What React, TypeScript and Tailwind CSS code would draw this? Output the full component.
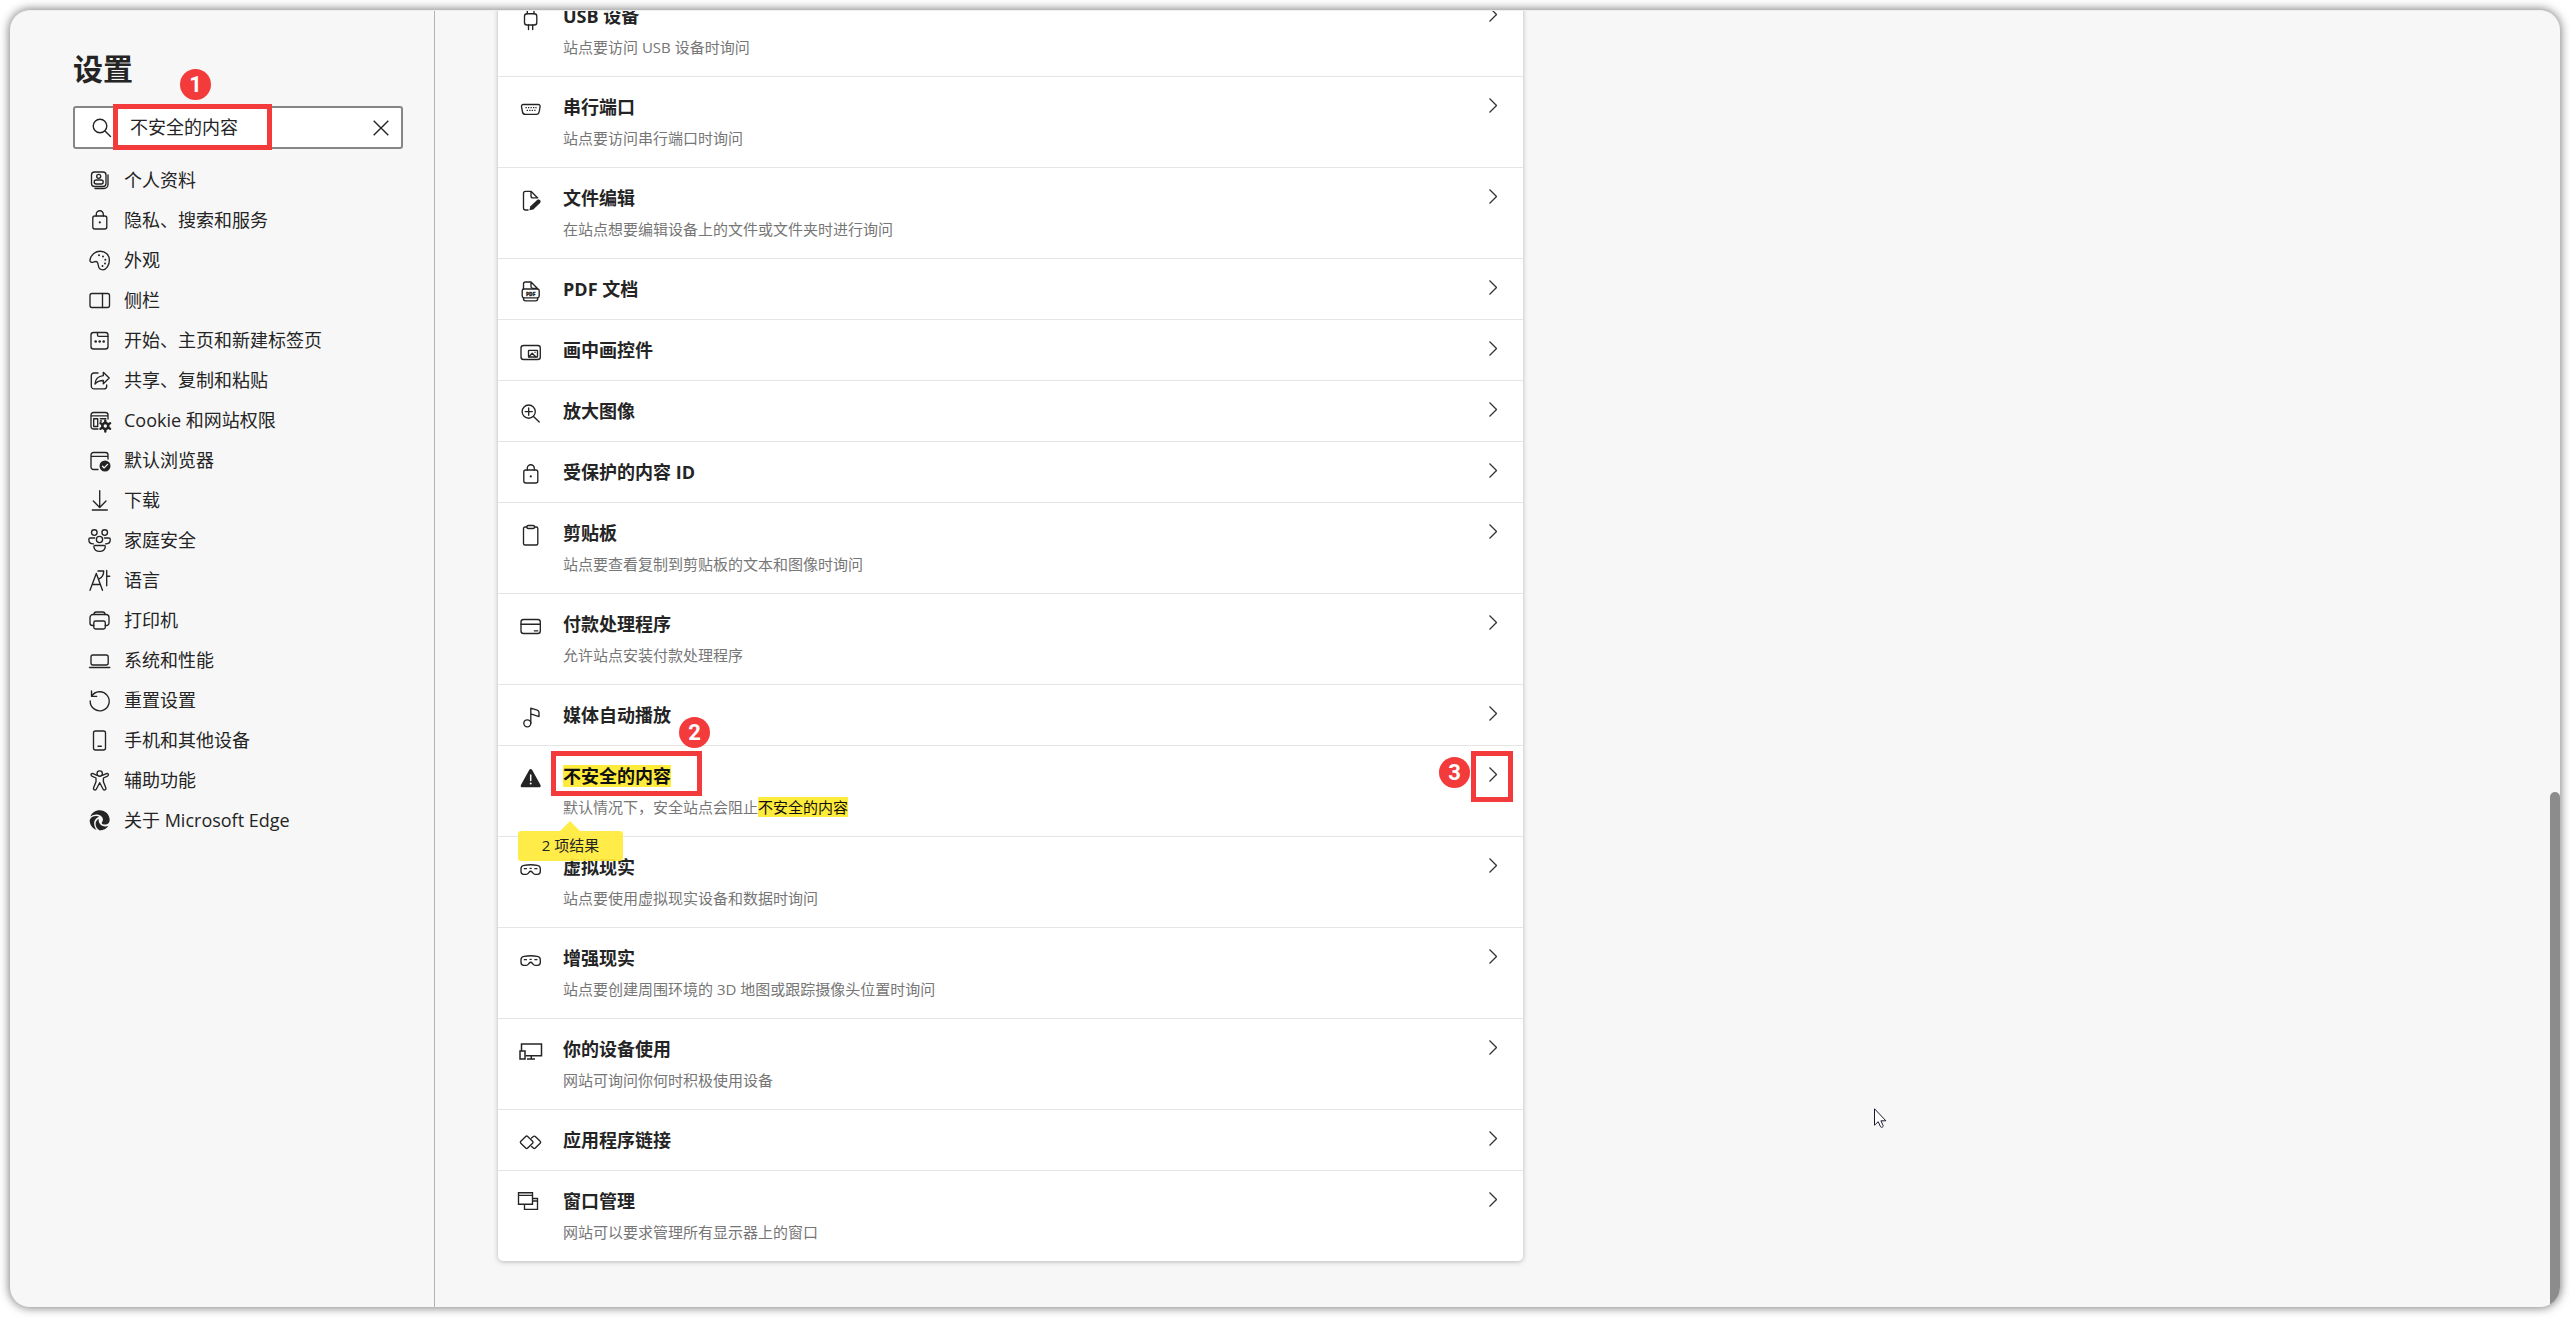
import type { ReactNode } from "react";

type IconName =
  | "profile" | "lock" | "palette" | "sidebar" | "home" | "share" | "cookie" | "browser"
  | "download" | "family" | "language" | "printer" | "laptop" | "reset" | "phone" | "person"
  | "edge" | "usb" | "serial" | "fileEdit" | "pdf" | "pip" | "zoom" | "clipboard" | "card"
  | "music" | "warning" | "headset" | "devices" | "link" | "windows";

const glyphs: Record<IconName, ReactNode> = {
  profile: (
    <>
      <rect x="3.5" y="4" width="14.5" height="14.5" rx="3" />
      <path d="M20 7v9.5a4 4 0 0 1-4 4H7" />
      <circle cx="10.7" cy="8.3" r="2" />
      <rect x="6.2" y="12" width="9" height="4" rx="2" />
    </>
  ),
  lock: (
    <>
      <rect x="4.8" y="8" width="14" height="13" rx="2" />
      <path d="M8.3 8V6.2a3.5 3.5 0 0 1 7 0V8" />
      <circle cx="11.8" cy="14.4" r="1.1" fill="currentColor" stroke="none" />
    </>
  ),
  palette: (
    <>
      <path d="M2 11.8C3.2 6.500 7.500 3.200 12.200 3.200c5.300 0 9.200 4 9.200 8.800 0 5.300-3.200 9.800-6.500 9.800-2.600 0-4.200-1.700-4.600-4.300-.3-2.400-.6-4-2.300-4-1.500 0-2.200.9-3.500.9C2.800 14.400 1.700 13.400 2 11.800z" />
      <g fill="currentColor" stroke="none">
        <circle cx="11" cy="7.300" r="1" />
        <circle cx="15" cy="8.500" r="1" />
        <circle cx="17.300" cy="11.800" r="1" />
        <circle cx="17" cy="15.500" r="1" />
        <circle cx="14.500" cy="18" r="1" />
      </g>
    </>
  ),
  sidebar: (
    <>
      <rect x="2" y="5.500" width="19.500" height="14" rx="2" />
      <path d="M14.500 5.500v14" />
    </>
  ),
  home: (
    <>
      <rect x="3" y="4.500" width="17" height="16.500" rx="2.500" />
      <path d="M9.500 4.500V7a1.300 1.300 0 0 0 1.300 1.300H20" />
      <g fill="currentColor" stroke="none">
        <circle cx="7.700" cy="13.500" r="1.300" />
        <circle cx="11.700" cy="13.500" r="1.300" />
        <circle cx="15.700" cy="13.500" r="1.300" />
      </g>
    </>
  ),
  share: (
    <>
      <path d="M10 5H6a2.700 2.700 0 0 0-2.700 2.700v10.500A2.700 2.700 0 0 0 6 20.900h10a2.700 2.700 0 0 0 2.700-2.700V17" />
      <path d="M15.300 4.300l5.900 5.700-5.900 5.700v-3.200c-3.500 0-6 .8-8.300 3.500.3-4.700 3.500-7.800 8.300-8.300z" />
    </>
  ),
  cookie: (
    <>
      <path d="M10 21H5.500A2.500 2.500 0 0 1 3 18.500V7a2.500 2.500 0 0 1 2.500-2.500h12A2.500 2.500 0 0 1 20 7v4M3 7.900h17" />
      <rect x="5.700" y="10.700" width="4" height="7.800" />
      <path d="M12.300 10.700h5.500M12.300 13h1.200" />
      <circle cx="17.300" cy="18" r="3" strokeWidth="2.600" />
      <path d="M17.300 12.500v2M17.300 21.500v2M12.500 15.200l1.800 1M20.300 19.700l1.800 1M12.500 20.800l1.800-1M20.300 16.300l1.800-1" strokeWidth="2.400" />
    </>
  ),
  browser: (
    <>
      <path d="M10 21.500H5.500A2.500 2.500 0 0 1 3 19V7a2.500 2.500 0 0 1 2.500-2.500h12A2.500 2.500 0 0 1 20 7v4M3 8.300h17" />
      <circle cx="17" cy="18" r="5.500" fill="currentColor" stroke="none" />
      <path d="M14.500 18.200l1.700 1.700 3.400-3.500" stroke="#f7f7f7" />
    </>
  ),
  download: <path d="M11.700 2.700v16.500M5.300 13l6.400 6.500L18 13M4.300 22h15" />,
  family: (
    <>
      <circle cx="6.300" cy="4.500" r="2.800" />
      <circle cx="16.700" cy="4.500" r="2.800" />
      <circle cx="11.500" cy="11.500" r="3.100" />
      <path d="M6.700 10H2.300c-.9 0-1.500.5-1.500 1.400 0 2.800 2 4.500 4.700 4.500M16.400 10h4.400c.9 0 1.500.5 1.500 1.400 0 2.800-2 4.500-4.700 4.500" />
      <path d="M7.200 17.500h8.800c.8 0 1.400.5 1.300 1.300-.4 3-2.600 4.500-5.700 4.500S6.300 21.800 5.900 18.800c-.1-.8.5-1.300 1.300-1.300z" />
    </>
  ),
  language: <path d="M2 22.300L8.300 5.500l6.200 16.800M4.200 16.500h8.200M10 3h5.700c0 4-1.500 6.300-4.300 7.700M18.700 2.500v15.300M18.700 8.200h3" />,
  printer: (
    <>
      <path d="M5.800 17.500H4.500A2.500 2.500 0 0 1 2 15V9.500A3 3 0 0 1 5 6.500h13a3 3 0 0 1 3 3V15a2.500 2.500 0 0 1-2.500 2.500h-1.200" />
      <path d="M6 6.500c0-1.700.8-2.500 2.300-2.500h6.400c1.500 0 2.300.8 2.300 2.500" />
      <rect x="5.800" y="13" width="11.500" height="8" rx="1.800" />
    </>
  ),
  laptop: (
    <>
      <rect x="3" y="7" width="17.200" height="10" rx="2" />
      <path d="M1.500 19.500h20.300" />
    </>
  ),
  reset: <path d="M3.600 8.300A9.500 9.500 0 1 1 2.200 13M3.500 3v5.300H8.700" />,
  phone: (
    <>
      <rect x="5.500" y="3" width="12" height="19" rx="2" />
      <path d="M10 18.200h3.300" />
    </>
  ),
  person: (
    <>
      <circle cx="11.700" cy="5.500" r="2.700" />
      <path d="M9 7.300L5 5.600c-1-.4-2 .2-2 1.200 0 .6.300 1 .9 1.300L8 10v3.800l-2.400 6c-.4 1 .1 1.900 1 2.100.8.200 1.500-.1 1.800-.9l3.300-6.300L15 21c.3.800 1 1.100 1.800.9.900-.2 1.400-1.100 1-2.100l-2.400-6V10l4.100-1.900c.6-.3.900-.7.900-1.300 0-1-1-1.600-2-1.200l-4 1.700" />
    </>
  ),
  edge: (
    <g fill="currentColor" stroke="none">
      <path d="M2.300 8.600C3.800 4.800 7.400 2.300 11.700 2.300c5.600 0 10 4.400 10 9.700 0 2.700-1.800 4.600-4.400 4.600-2 0-3.600-.7-3.600-1.700 0-.7 1.200-1.100 1.200-3.200 0-3-2.900-5.200-6.400-5.200-2.300 0-4.400.8-6.200 2.100z" />
      <path d="M1.700 12.200c.6-2.600 3.300-4.200 6.600-4.200 1.200 0 2.200.3 3 .7C7.600 10 5.800 13 6.200 16.200c.2 2.100 1.100 4 2.500 5.700-4.200-1.300-7.100-5.200-7-9.700z" />
      <path d="M10.700 10.700c-.7 3.600 2 7.700 6.700 7.700 1.200 0 2.200-.2 3-.6-1.800 2.900-5 4.600-8.600 4.600-2.500-1.400-4.200-3.700-4.200-6.500 0-2.200 1.200-4.200 3.100-5.200z" />
    </g>
  ),
  usb: (
    <>
      <rect x="5.500" y="7.700" width="12.300" height="11.300" rx="2.500" />
      <path d="M8.300 2v5.700M15 2v5.700M9.500 19v4.500M13.700 19v4.500" />
    </>
  ),
  serial: (
    <>
      <path d="M4.300 7.500h15c1.300 0 2 .9 1.800 2.100l-1 5.400c-.3 1.500-1.300 2.300-2.800 2.300H6.300c-1.500 0-2.500-.8-2.800-2.300l-1-5.400C2.300 8.400 3 7.500 4.300 7.500z" />
      <path d="M6.500 10.700h1.300M9 10.700h1.300M11.500 10.700h1.300M14 10.700h1.300M16.300 10.700h1.300M7.700 13.400H9M10.200 13.400h1.300M12.700 13.400H14M15.200 13.400h1.300" strokeWidth="1.300" strokeLinecap="butt" />
    </>
  ),
  fileEdit: (
    <>
      <path d="M9 22H6.500a2 2 0 0 1-2-2V5.300a2 2 0 0 1 2-2H12l6.700 6.600M12 3.300v4.600a2 2 0 0 0 2 2h4.700" />
      <path d="M10.400 22.300l1-4 6.700-6.300c1.800-1.600 4.700.8 3 2.900l-6.800 6.500z" fill="currentColor" stroke="none" />
    </>
  ),
  pdf: (
    <>
      <path d="M4.500 10V5a2 2 0 0 1 2-2H12l6.500 6.500M12 3v4.500a1.800 1.800 0 0 0 1.800 1.800h4.700M4.500 19v.8a2 2 0 0 0 2 2h10.200a2 2 0 0 0 2-2V19" />
      <rect x="3.200" y="10" width="17" height="8.800" rx="1.800" />
      <text x="11.700" y="16.500" textAnchor="middle" fontSize="5" fontWeight="800" fill="currentColor" strokeWidth="0.300">PDF</text>
    </>
  ),
  pip: (
    <>
      <rect x="2" y="5.500" width="19.300" height="14" rx="2.500" />
      <rect x="9.500" y="10.300" width="9" height="6.700" rx=".5" />
      <path d="M10 16.700l3.200-3.400 3.500 3.500" />
      <circle cx="16" cy="12.300" r=".7" fill="currentColor" stroke="none" />
    </>
  ),
  zoom: (
    <>
      <circle cx="9.700" cy="10.600" r="6.600" />
      <path d="M14.500 15.500l5.700 5.500M9.700 7v7.200M6.100 10.600h7.200" />
    </>
  ),
  clipboard: (
    <>
      <path d="M7.700 4H6a1.500 1.500 0 0 0-1.500 1.500v15A1.500 1.500 0 0 0 6 22h11.300a1.500 1.500 0 0 0 1.500-1.500v-15A1.500 1.500 0 0 0 17.300 4h-1.600" />
      <rect x="7.800" y="2.500" width="7.800" height="3" rx="1.500" />
    </>
  ),
  card: (
    <>
      <rect x="2" y="5.500" width="19.300" height="14" rx="2.500" />
      <path d="M2 10.200h19.300M15.300 16.800h3.500" />
    </>
  ),
  music: (
    <>
      <circle cx="8.300" cy="18.300" r="3.500" />
      <path d="M11.800 18.300V3.200l6.500 2c1 .4 1.700 1 1.700 2.200v4.200l-8.200-2.800" />
    </>
  ),
  warning: (
    <>
      <path d="M10.200 3.900c.6-1.200 2.300-1.200 3 0l8.300 15c.6 1.200-.1 2.400-1.400 2.400H3.300c-1.300 0-2-1.200-1.400-2.400z" fill="currentColor" stroke="none" />
      <path d="M11.700 9v5.500" stroke="#fff" strokeWidth="1.500" />
      <circle cx="11.700" cy="17.600" r="1" fill="#fff" stroke="none" />
    </>
  ),
  headset: (
    <>
      <path d="M5 8.300c4.500-.7 9-.7 13.300 0 1.900.3 3 1.500 3 3.300v3c0 1.700-1 2.800-2.700 2.800h-2.500c-1 0-1.500-.4-2.100-1.200l-.9-1.200c-.7-1-2.100-1-2.800 0l-.9 1.200c-.6.800-1.100 1.200-2.100 1.200H4.700C3 17.400 2 16.300 2 14.600v-3c0-1.800 1.100-3 3-3.300z" />
      <path d="M5.300 11.700h2.200M15.800 11.700H18M11 11.300h1.300" strokeWidth="1.200" />
    </>
  ),
  devices: (
    <g strokeLinejoin="miter" strokeLinecap="butt" strokeWidth="1.500">
      <path d="M2.500 12V5h20v11.700H6.500M12.300 16.700v3M8 20h8" />
      <rect x="1" y="12" width="5" height="8" />
    </g>
  ),
  link: (
    <>
      <path d="M6.700 6.500c.6-.6 1.400-.6 2 0l4.900 4.800c.6.600.6 1.400 0 2l-4.900 4.800c-.6.600-1.400.6-2 0l-4.900-4.800c-.6-.6-.6-1.400 0-2z" />
      <path d="M12.600 8l1.700-1.500c.6-.6 1.400-.6 2 0l4.900 4.800c.6.600.6 1.400 0 2l-4.900 4.800c-.6.600-1.400.6-2 0l-1.700-1.600" />
    </>
  ),
  windows: (
    <g strokeLinejoin="miter" strokeLinecap="butt">
      <path d="M-.5 1.700h14v11.500h-14zM-.5 4.300h14M13.500 7.500h5v10.800h-13v-5M13.500 10h5" />
    </g>
  ),
};

function Icon({ name }: { name: IconName }) {
  return (
    <svg
      viewBox="0 0 24 24"
      className="size-6 shrink-0 overflow-visible text-[#242424]"
      fill="none"
      stroke="currentColor"
      strokeWidth="1.35"
      strokeLinecap="round"
      strokeLinejoin="round"
      aria-hidden="true"
    >
      {glyphs[name]}
    </svg>
  );
}

const navItems: { icon: IconName; label: string }[] = [
  { icon: "profile", label: "个人资料" },
  { icon: "lock", label: "隐私、搜索和服务" },
  { icon: "palette", label: "外观" },
  { icon: "sidebar", label: "侧栏" },
  { icon: "home", label: "开始、主页和新建标签页" },
  { icon: "share", label: "共享、复制和粘贴" },
  { icon: "cookie", label: "Cookie 和网站权限" },
  { icon: "browser", label: "默认浏览器" },
  { icon: "download", label: "下载" },
  { icon: "family", label: "家庭安全" },
  { icon: "language", label: "语言" },
  { icon: "printer", label: "打印机" },
  { icon: "laptop", label: "系统和性能" },
  { icon: "reset", label: "重置设置" },
  { icon: "phone", label: "手机和其他设备" },
  { icon: "person", label: "辅助功能" },
  { icon: "edge", label: "关于 Microsoft Edge" },
];

const query = "不安全的内容";

const permissions: { icon: IconName; title: string; note?: string }[] = [
  { icon: "usb", title: "USB 设备", note: "站点要访问 USB 设备时询问" },
  { icon: "serial", title: "串行端口", note: "站点要访问串行端口时询问" },
  { icon: "fileEdit", title: "文件编辑", note: "在站点想要编辑设备上的文件或文件夹时进行询问" },
  { icon: "pdf", title: "PDF 文档" },
  { icon: "pip", title: "画中画控件" },
  { icon: "zoom", title: "放大图像" },
  { icon: "lock", title: "受保护的内容 ID" },
  { icon: "clipboard", title: "剪贴板", note: "站点要查看复制到剪贴板的文本和图像时询问" },
  { icon: "card", title: "付款处理程序", note: "允许站点安装付款处理程序" },
  { icon: "music", title: "媒体自动播放" },
  { icon: "warning", title: "不安全的内容", note: "默认情况下，安全站点会阻止不安全的内容" },
  { icon: "headset", title: "虚拟现实", note: "站点要使用虚拟现实设备和数据时询问" },
  { icon: "headset", title: "增强现实", note: "站点要创建周围环境的 3D 地图或跟踪摄像头位置时询问" },
  { icon: "devices", title: "你的设备使用", note: "网站可询问你何时积极使用设备" },
  { icon: "link", title: "应用程序链接" },
  { icon: "windows", title: "窗口管理", note: "网站可以要求管理所有显示器上的窗口" },
];

function Highlighted({ text }: { text: string }) {
  const at = text.indexOf(query);
  if (at < 0) return <>{text}</>;
  return (
    <>
      {text.slice(0, at)}
      <mark className="inline-block bg-[#ffeb3b] text-[#101010]">{query}</mark>
      {text.slice(at + query.length)}
    </>
  );
}

function StepBadge({ step, className }: { step: number; className: string }) {
  return (
    <span
      className={`pointer-events-none absolute z-20 flex size-[31px] items-center justify-center rounded-full bg-[#f43b3b] font-['Roboto',sans-serif] text-[22px] font-bold leading-none text-white ${className}`}
    >
      {step}
    </span>
  );
}

function StepFrame({ className }: { className: string }) {
  return <span className={`pointer-events-none absolute z-10 border-5 border-[#f43b3b] ${className}`} />;
}

function PermissionRow({ icon, title, note }: { icon: IconName; title: string; note?: string }) {
  const matched = title === query;
  return (
    <li className="relative border-b border-[#e5e5e5] last:border-b-0">
      <button type="button" className="flex w-full items-start pb-4 pl-[21px] pr-[26px] pt-[18px] text-left">
        <span className="flex pt-[2px]">
          <Icon name={icon} />
        </span>
        <span className="ml-5 flex min-w-0 grow flex-col">
          <span className="flex h-6 items-center text-[18px] font-bold leading-6 text-[#242424]">
            <span className={matched ? "bg-[#ffeb3b] leading-[22px] text-[#101010]" : ""}>{title}</span>
          </span>
          {note && (
            <span className="mb-[3px] mt-[9px] text-[15px] leading-5 text-[#767676]">
              <Highlighted text={note} />
            </span>
          )}
        </span>
        <svg viewBox="0 0 8 15" className="mt-[3px] h-[15px] w-2 shrink-0" fill="none" stroke="#333" strokeWidth="1.300" aria-hidden="true">
          <path d="M.5.5l7 7-7 7" />
        </svg>
      </button>
      {matched && (
        <>
          <StepFrame className="left-[53px] top-[5px] h-[45px] w-[151px]" />
          <StepBadge step={2} className="left-[181px] top-[-29px]" />
          <StepFrame className="right-[10px] top-[5px] h-[51px] w-[42px]" />
          <StepBadge step={3} className="right-[53px] top-[11px]" />
          <div className="absolute left-5 top-[85px] z-10 h-[30px] w-[105px] rounded-[3px] bg-[#ffeb3b]/93 text-center text-[15px] leading-7 text-[#242424]">
            <svg viewBox="0 0 20 10" className="absolute -top-[10px] left-[42px] h-[10px] w-5" aria-hidden="true">
              <path d="M0 10L10 0l10 10z" fill="#ffeb3b" fillOpacity=".93" />
            </svg>
            2 项结果
          </div>
        </>
      )}
    </li>
  );
}

export default function App() {
  return (
    <div className="relative min-h-screen bg-white p-[10px] font-['Open_Sans','Noto_Sans_CJK_SC',sans-serif] text-[#242424]">
      <div className="relative flex overflow-hidden rounded-[20px] border-t border-[#efefef] bg-[#f7f7f7] shadow-[0_0_10px_1px_rgba(0,0,0,0.5)]">
        <aside className="w-[425px] shrink-0 border-r border-[#b3b3b3] pl-[63px] pr-[31px] pt-[38px]">
          <h1 className="text-[30px] font-bold leading-10">设置</h1>
          <div className="relative mt-[17px]">
            <div className="flex h-[43px] items-center rounded-[3px] border-2 border-[#868686] bg-white pl-[17px] pr-3">
              <svg viewBox="0 0 20 20" className="size-5 shrink-0" fill="none" stroke="#242424" strokeWidth="1.400" strokeLinecap="round" aria-hidden="true">
                <circle cx="8" cy="8" r="6.800" />
                <path d="M13 13l5.500 5.500" />
              </svg>
              <input
                aria-label="搜索设置"
                defaultValue={query}
                className="ml-[18px] min-w-0 grow bg-transparent pb-[2px] text-[18px] leading-6 outline-none"
              />
              <button type="button" aria-label="清除搜索" className="flex">
                <svg viewBox="0 0 16 16" className="size-4" fill="none" stroke="#242424" strokeWidth="1.400" aria-hidden="true">
                  <path d="M.7.7l14.600 14.600M15.300.7L.7 15.300" />
                </svg>
              </button>
            </div>
            <StepFrame className="-top-[2px] left-10 h-[46px] w-[159px]" />
            <StepBadge step={1} className="-top-[37px] left-[107px]" />
          </div>
          <nav className="mt-[11px]">
            <ul>
              {navItems.map((item) => (
                <li key={item.label}>
                  <a href="#" className="flex h-10 items-center gap-3 pl-[15px] text-[18px] leading-6">
                    <Icon name={item.icon} />
                    <span className="pb-px">{item.label}</span>
                  </a>
                </li>
              ))}
            </ul>
          </nav>
        </aside>
        <main className="min-w-0 grow pb-[46px] pl-[63px]">
          <ul className="-mt-[25px] max-w-[1025px] rounded-[5px] bg-white shadow-[0_1px_5px_rgba(0,0,0,0.25)]">
            {permissions.map((item) => (
              <PermissionRow key={item.title} {...item} />
            ))}
          </ul>
        </main>
        <div className="absolute bottom-0 right-0 top-[781px] w-[10px] rounded-t-[5px] bg-[#8c8c8c]" />
      </div>
      <svg viewBox="0 0 14 20" className="pointer-events-none absolute left-[1874px] top-[1108px] h-5 w-[14px]" aria-hidden="true">
        <path d="M.5.8v16.400l3.700-3.500 2.300 5c1.200 1.200 3 .4 2.600-1.200l-2.200-4.700h5z" fill="#fff" stroke="#1a1a2e" />
      </svg>
    </div>
  );
}
